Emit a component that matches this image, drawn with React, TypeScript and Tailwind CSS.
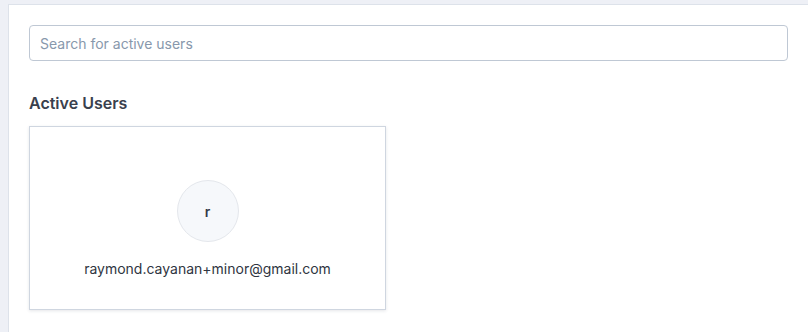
import React from 'react';

const users = [{ email: 'raymond.cayanan+minor@gmail.com' }];

const UserCard: React.FC<{ email: string }> = ({ email }) => (
  <div className="flex h-[184px] w-[357px] flex-col items-center border border-[#cfd6e0] bg-white pt-[53px] shadow-[0_1px_3px_rgba(40,50,70,0.12)]">
    <div className="flex h-[62px] w-[62px] items-center justify-center rounded-full border border-[#e4e7ec] bg-[#f6f8fb] text-[14px] font-semibold text-[#333a47]">
      {email.charAt(0)}
    </div>
    <p className="mt-[17px] text-[14px] leading-[20px] text-[#2f3541]">{email}</p>
  </div>
);

export default function App() {
  return (
    <div className="h-[332px] overflow-hidden bg-[#eef0f6] pl-2 pt-1 font-['Inter',sans-serif]">
      <div className="h-full border-l border-t border-[#dde2ea] bg-white px-5 pt-5">
        <input
          type="text"
          placeholder="Search for active users"
          className="block h-[36px] w-full rounded-[4px] border border-[#bfc8d4] px-[10px] text-[14px] text-[#333a47] outline-none placeholder:text-[#8898ac]"
        />
        <h2 className="mt-[32px] text-[16px] font-semibold leading-[20px] text-[#39404d]">Active Users</h2>
        <div className="mt-[13px] flex gap-4">
          {users.map((u) => (
            <UserCard key={u.email} email={u.email} />
          ))}
        </div>
      </div>
    </div>
  );
}
